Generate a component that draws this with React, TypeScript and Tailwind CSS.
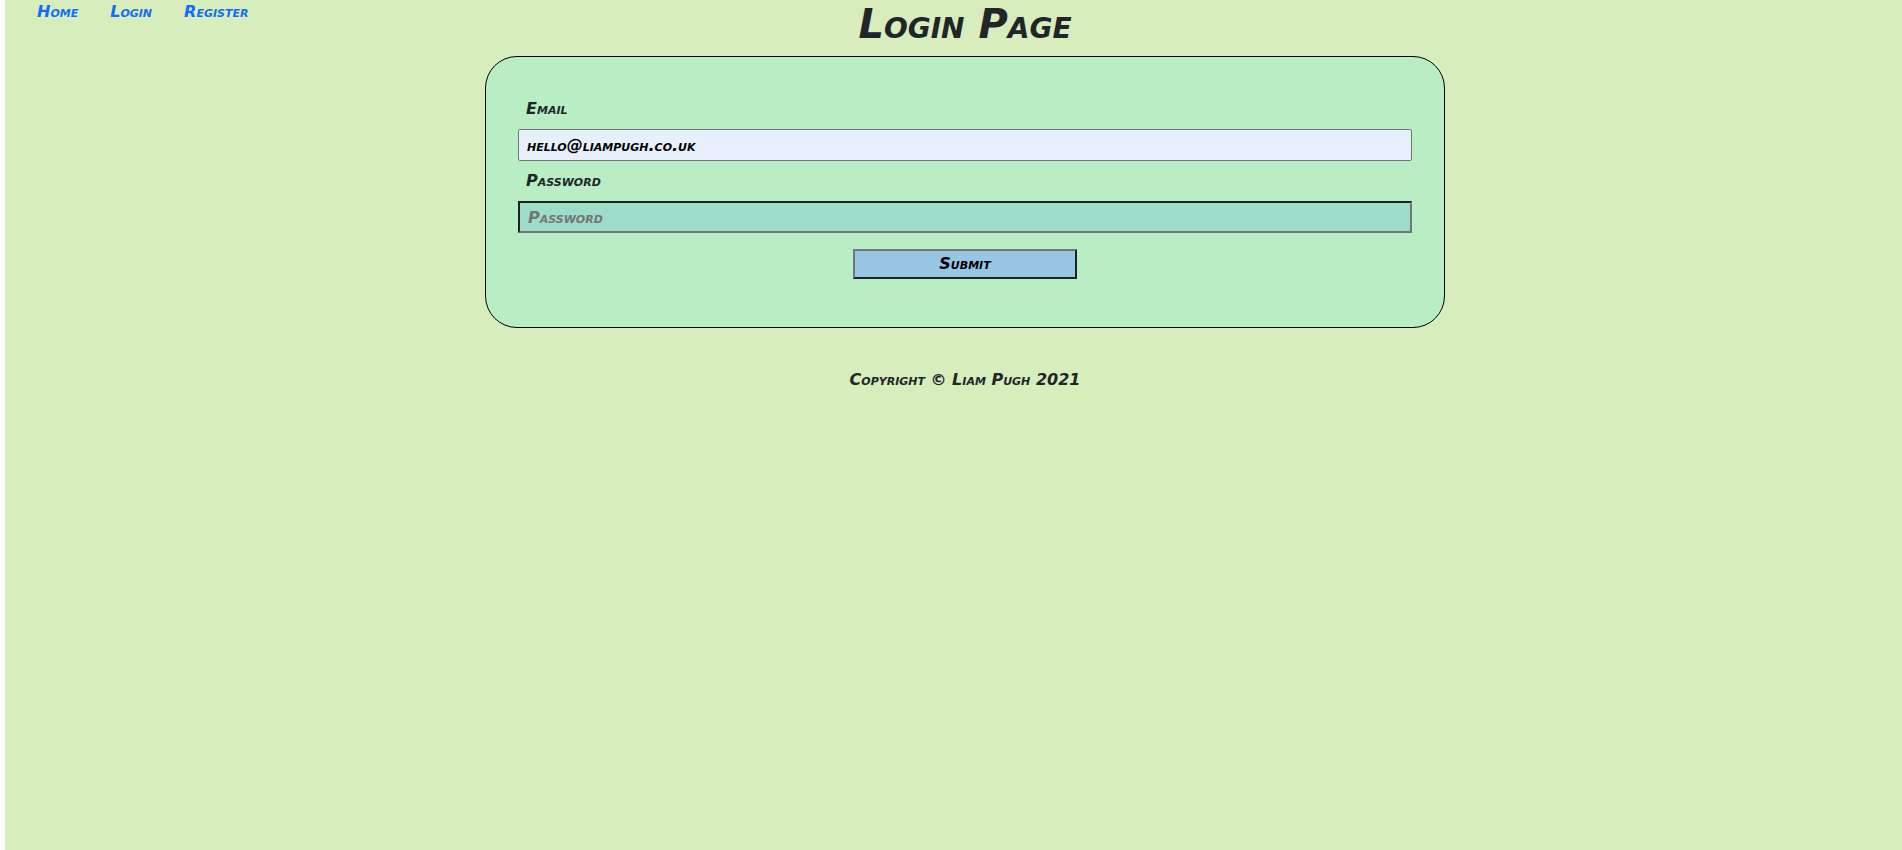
import React from "react";

const links = ["Home", "Login", "Register"];

export default function App() {
  return (
    <div className="min-h-screen border-l-[5px] border-white bg-[#d7edbc] font-['DejaVu_Sans','Open_Sans',sans-serif] text-base font-bold italic text-[#212529] [font-variant-caps:small-caps]">
      <div className="grid grid-cols-1">
        <nav className="col-start-1 row-start-1 justify-self-start pl-8">
          <ul className="flex gap-8">
            {links.map((name) => (
              <li key={name}>
                <a href={"#" + name.toLowerCase()} className="text-[#0d6efd]">
                  {name}
                </a>
              </li>
            ))}
          </ul>
        </nav>
        <main className="col-start-1 row-start-1 flex flex-col items-center pl-[23px]">
          <h1 className="mb-2 text-[40px] leading-[48px]">Login Page</h1>
          <form
            className="flex w-full max-w-[960px] flex-col rounded-[32px] border border-black bg-[#b9eec5] p-8"
            onSubmit={(e) => e.preventDefault()}
          >
            <label htmlFor="email" className="px-2 py-2 leading-6">
              Email
            </label>
            <input
              id="email"
              type="email"
              defaultValue="hello@liampugh.co.uk"
              className="h-8 w-full rounded-[2px] border border-[#767676] bg-[#e8f0fe] px-2 text-black [font-variant-caps:inherit]"
            />
            <label htmlFor="password" className="px-2 py-2 leading-6">
              Password
            </label>
            <input
              id="password"
              type="password"
              placeholder="Password"
              className="h-8 w-full border-2 border-t-[#212121] border-r-[#767676] border-b-[#767676] border-l-[#212121] bg-[#9cdcc8] px-2 text-black [font-variant-caps:inherit] placeholder:text-[#757575]"
            />
            <button
              type="submit"
              className="my-4 flex h-[30px] w-1/4 items-center justify-center self-center border-2 border-t-[#767676] border-r-[#212121] border-b-[#212121] border-l-[#767676] bg-[#98c5e3] text-black [font-variant-caps:inherit]"
            >
              Submit
            </button>
          </form>
          <footer className="mt-10 leading-6">Copyright © Liam Pugh 2021</footer>
        </main>
      </div>
    </div>
  );
}
